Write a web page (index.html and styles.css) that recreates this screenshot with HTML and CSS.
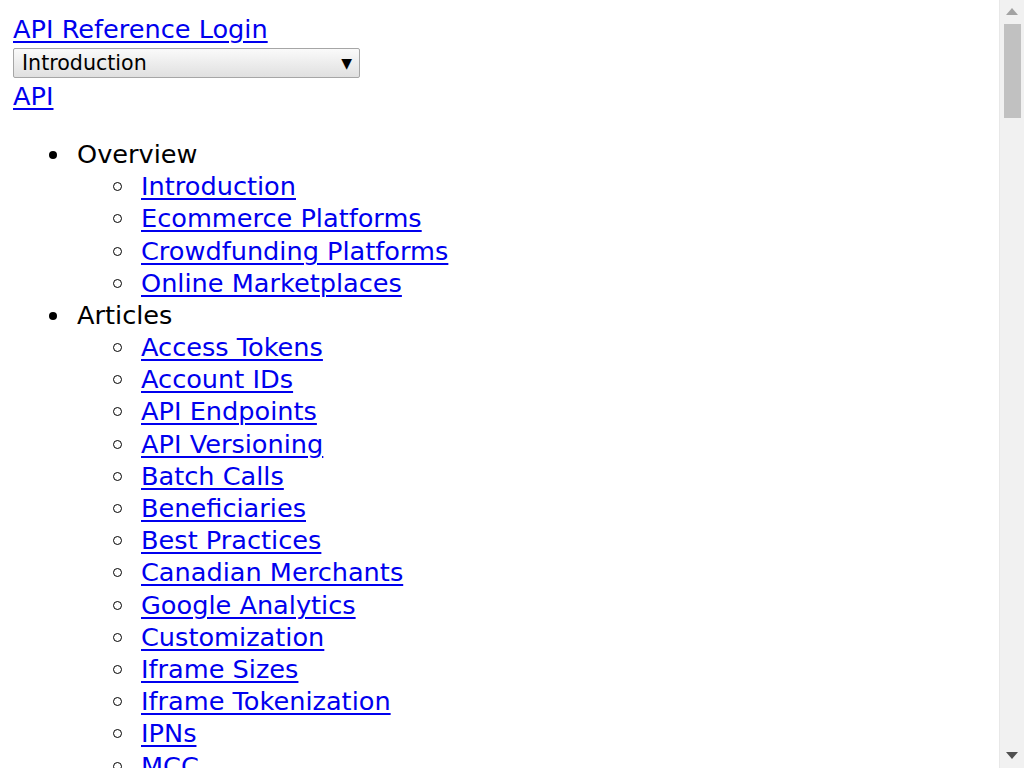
FILE: index.html
```html
<!DOCTYPE html>
<html lang="en">
<head>
<meta charset="utf-8">
<title>API Reference</title>
<link rel="stylesheet" href="styles.css">
</head>
<body>
<div class="viewport">
  <main class="page">
    <a class="link" href="#">API Reference Login</a>
    <div class="select">
      <span class="select-text">Introduction</span>
      <span class="select-arrow">▼</span>
    </div>
    <a class="link" href="#">API</a>
    <ul class="nav">
      <li>Overview
        <ul class="sub">
          <li><a class="link" href="#">Introduction</a></li>
          <li><a class="link" href="#">Ecommerce Platforms</a></li>
          <li><a class="link" href="#">Crowdfunding Platforms</a></li>
          <li><a class="link" href="#">Online Marketplaces</a></li>
        </ul>
      </li>
      <li>Articles
        <ul class="sub">
          <li><a class="link" href="#">Access Tokens</a></li>
          <li><a class="link" href="#">Account IDs</a></li>
          <li><a class="link" href="#">API Endpoints</a></li>
          <li><a class="link" href="#">API Versioning</a></li>
          <li><a class="link" href="#">Batch Calls</a></li>
          <li><a class="link" href="#">Beneficiaries</a></li>
          <li><a class="link" href="#">Best Practices</a></li>
          <li><a class="link" href="#">Canadian Merchants</a></li>
          <li><a class="link" href="#">Google Analytics</a></li>
          <li><a class="link" href="#">Customization</a></li>
          <li><a class="link" href="#">Iframe Sizes</a></li>
          <li><a class="link" href="#">Iframe Tokenization</a></li>
          <li><a class="link" href="#">IPNs</a></li>
          <li><a class="link" href="#">MCC</a></li>
          <li><a class="link" href="#">Payment Methods</a></li>
          <li><a class="link" href="#">Permissions</a></li>
        </ul>
      </li>
    </ul>
  </main>
  <div class="scrollbar">
    <div class="arrow-up"></div>
    <div class="thumb"></div>
    <div class="track-fill"></div>
    <div class="arrow-down"></div>
  </div>
</div>
</body>
</html>
```

FILE: styles.css
```css
html, body {
  margin: 0;
  padding: 0;
  height: 100%;
  overflow: hidden;
  background: #ffffff;
}

.viewport {
  display: flex;
  height: 100vh;
}

.page {
  flex: 1;
  overflow: hidden;
  padding: 13px 13px 0 13px;
  font-family: "DejaVu Sans", sans-serif;
  font-size: 25.6px;
  line-height: 32.18px;
  color: #000000;
}

.link {
  color: #0000ee;
  text-decoration: underline;
  text-decoration-thickness: 2px;
  text-underline-offset: 3px;
}

.page > .link {
  display: block;
  width: max-content;
}

.select {
  box-sizing: border-box;
  display: flex;
  align-items: center;
  justify-content: space-between;
  width: 347px;
  height: 30px;
  margin: 3px 0 2px 0;
  padding: 0 7px 0 8px;
  border: 1px solid #a6a6a6;
  border-radius: 2px;
  background: linear-gradient(#fafafa, #e0e0e0);
  font-size: 20.6px;
  line-height: 28px;
  color: #000000;
}

.select-arrow {
  font-size: 14px;
  line-height: 1;
}

.nav {
  margin: 25.6px 0;
  padding-left: 36px;
  list-style: none;
}

.nav > li::before {
  content: "";
  display: inline-block;
  width: 8px;
  height: 8px;
  margin-right: 20px;
  border-radius: 50%;
  background: #000000;
  vertical-align: 4px;
}

.sub {
  margin: 0;
  padding-left: 64px;
  list-style: none;
}

.sub > li::before {
  content: "";
  display: inline-block;
  box-sizing: border-box;
  width: 9px;
  height: 9px;
  margin-right: 19px;
  border-radius: 50%;
  border: 1.6px solid #000000;
  vertical-align: 4px;
}

.scrollbar {
  width: 24px;
  display: flex;
  flex-direction: column;
  align-items: center;
  background: #f1f1f1;
  border-left: 1px solid #e8e8e8;
}

.arrow-up {
  width: 0;
  height: 0;
  margin-top: 8px;
  border-left: 6px solid transparent;
  border-right: 6px solid transparent;
  border-bottom: 7px solid #a3a3a3;
}

.thumb {
  width: 17px;
  height: 94px;
  margin-top: 9px;
  background: #c1c1c1;
}

.track-fill {
  flex: 1;
}

.arrow-down {
  width: 0;
  height: 0;
  margin-bottom: 9px;
  border-left: 6px solid transparent;
  border-right: 6px solid transparent;
  border-top: 7px solid #505050;
}
```
